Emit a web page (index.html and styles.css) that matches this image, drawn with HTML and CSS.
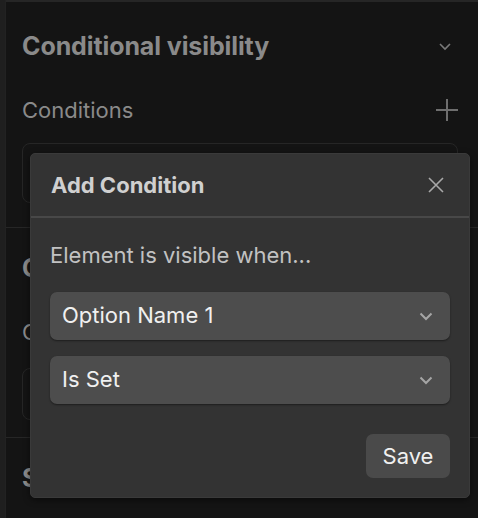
FILE: index.html
```html
<!DOCTYPE html>
<html>
<head>
<meta charset="utf-8">
<link rel="stylesheet" href="styles.css">
</head>
<body>
<div class="app">
  <div class="rail"></div>
  <div class="panel">
    <div class="topbar"></div>
    <section class="section">
      <div class="sec-head">
        <h2 class="sec-title">Conditional visibility</h2>
        <svg class="chev" width="14" height="14" viewBox="0 0 14 14"><path d="M2 5 L7 10 L12 5" fill="none" stroke="currentColor" stroke-width="1.6"/></svg>
      </div>
      <div class="label-row">
        <span class="label">Conditions</span>
        <svg class="plus" width="22" height="22" viewBox="0 0 22 22"><path d="M11 0 V22 M0 11 H22" stroke="currentColor" stroke-width="2"/></svg>
      </div>
      <div class="box"></div>
    </section>
    <section class="section sec-two">
      <div class="sec-head">
        <h2 class="sec-title">Content</h2>
      </div>
      <div class="label-row">
        <span class="label">Component</span>
      </div>
      <div class="box box-short"></div>
    </section>
    <section class="section sec-three">
      <div class="sec-head">
        <h2 class="sec-title">Settings</h2>
      </div>
    </section>
  </div>
</div>

<div class="modal">
  <div class="modal-head">
    <h3 class="modal-title">Add Condition</h3>
    <svg class="close" width="18" height="18" viewBox="0 0 18 18"><path d="M2 2 L16 16 M16 2 L2 16" stroke="currentColor" stroke-width="1.6"/></svg>
  </div>
  <div class="modal-body">
    <p class="hint">Element is visible when...</p>
    <div class="select"><span class="sval">Option Name 1</span><svg class="schev" width="14" height="10" viewBox="0 0 14 10"><path d="M1.5 2.5 L7 8 L12.5 2.5" fill="none" stroke="currentColor" stroke-width="2"/></svg></div>
    <div class="select"><span class="sval">Is Set</span><svg class="schev" width="14" height="10" viewBox="0 0 14 10"><path d="M1.5 2.5 L7 8 L12.5 2.5" fill="none" stroke="currentColor" stroke-width="2"/></svg></div>
    <div class="actions"><button class="save">Save</button></div>
  </div>
</div>
</body>
</html>
```

FILE: styles.css
```css
* { box-sizing: border-box; }
html, body {
  margin: 0;
  padding: 0;
  width: 478px;
  height: 518px;
  overflow: hidden;
  background: #141414;
  font-family: Inter, "Noto Sans", sans-serif;
}
.app {
  display: flex;
  height: 518px;
}
.rail {
  width: 6px;
  background: #1f1f1f;
  border-right: 1px solid #222;
}
.panel {
  flex: 1;
  display: flex;
  flex-direction: column;
}
.topbar {
  height: 6px;
  border-bottom: 2px solid #262626;
}
.section {
  padding: 24px 20px 24px 16px;
  border-bottom: 1px solid #262626;
}
.sec-head {
  height: 40px;
  display: flex;
  align-items: center;
  justify-content: space-between;
}
.sec-title {
  margin: 0;
  font-size: 25px;
  font-weight: 700;
  color: #8a8a8a;
  letter-spacing: -0.1px;
}
.chev {
  color: #7a7a7a;
  margin-right: 6px;
}
.label-row {
  margin-top: 24px;
  height: 40px;
  display: flex;
  align-items: center;
  justify-content: space-between;
}
.label {
  font-size: 22px;
  color: #8a8a8a;
}
.plus {
  color: #6e6e6e;
}
.box {
  margin-top: 13px;
  height: 60px;
  border: 1px solid #262626;
  border-radius: 8px;
}
.box-short { margin-top: 16px; height: 52px; }
.sec-two { padding-top: 20px; padding-bottom: 17px; }
.sec-three { border-bottom: none; padding-top: 20px; }

.modal {
  position: absolute;
  left: 30px;
  top: 153px;
  width: 440px;
  height: 345px;
  background: #333333;
  border: 1px solid #3a3a3a;
  border-radius: 5px;
  box-shadow: 0 2px 6px rgba(0,0,0,0.5);
}
.modal-head {
  height: 64px;
  padding: 0 24px 0 20px;
  display: flex;
  align-items: center;
  justify-content: space-between;
  border-bottom: 2px solid #484848;
}
.modal-title {
  margin: 0;
  font-size: 22px;
  font-weight: 700;
  color: #d0d0d0;
}
.close {
  color: #a8a8a8;
}
.modal-body {
  padding: 20px 19px 19px 19px;
  display: flex;
  flex-direction: column;
}
.hint {
  margin: 0;
  height: 34px;
  display: flex;
  align-items: center;
  font-size: 22px;
  color: #c2c2c2;
}
.select {
  margin-top: 20px;
  height: 48px;
  background: #4d4d4d;
  border-radius: 7px;
  box-shadow: 0 1px 2px rgba(0,0,0,0.45);
  display: flex;
  align-items: center;
  justify-content: space-between;
  padding: 0 17px 0 12px;
  font-size: 22px;
  color: #f0f0f0;
}
.sval { padding-bottom: 3px; }
.select + .select { margin-top: 16px; }
.schev { color: #a5a5a5; }
.actions {
  margin-top: 30px;
  display: flex;
  justify-content: flex-end;
}
.save {
  width: 84px;
  height: 44px;
  border: none;
  border-radius: 7px;
  background: #4a4a4a;
  color: #f0f0f0;
  font-family: Inter, "Noto Sans", sans-serif;
  font-size: 22px;
  padding: 0;
}
```
